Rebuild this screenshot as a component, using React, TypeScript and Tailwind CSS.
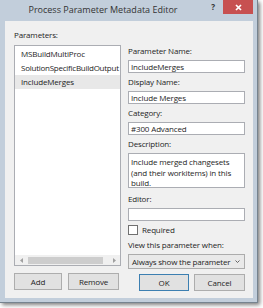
export default function App() {
  const labelCls = "h-[10px] leading-[10px] whitespace-nowrap";
  const inputCls =
    "h-[13px] border border-[#abadb3] bg-white pl-[2px] flex items-center whitespace-nowrap overflow-hidden";
  return (
    <div className="w-[263px] h-[308px] bg-white font-['Open_Sans','Noto_Sans',sans-serif] text-[8px] tracking-[-0.15px] text-[#1e1e1e] leading-[10px]">
      <div className="w-[258px] h-[303px] bg-[#c2cedb] flex flex-col border-r border-b border-[#76838f] shadow-[2px_2px_4px_rgba(0,0,0,0.5)]">
        {/* title bar */}
        <div className="h-[21px] flex items-start shrink-0">
          <div className="w-[206px] h-[20px] flex items-center justify-center text-[9px] tracking-normal text-[#333] whitespace-nowrap">
            Process Parameter Metadata Editor
          </div>
          <div className="w-[14px] h-[13px] flex items-center justify-center text-[8px] font-bold text-[#333]">
            ?
          </div>
          <div className="ml-[3px] w-[30px] h-[14px] bg-[#c75050] flex items-center justify-center">
            <svg width="7" height="7" viewBox="0 0 7 7">
              <path d="M1 1L6 6M6 1L1 6" stroke="white" strokeWidth="1.7" />
            </svg>
          </div>
        </div>
        {/* content */}
        <div className="ml-[5px] w-[248px] h-[277px] bg-[#f0f0f0] pt-[9px] pl-[9px] shrink-0">
          <div className={labelCls}>Parameters:</div>
          <div className="mt-[5px] flex gap-[7px]">
            {/* left column */}
            <div className="w-[107px] flex flex-col">
              <div className="h-[221px] border border-[#abadb3] bg-white flex flex-col overflow-hidden">
                <div className="flex-1 pt-[1px]">
                  <div className="h-[14px] pl-[6px] flex items-center whitespace-nowrap">MSBuildMultiProc</div>
                  <div className="h-[14px] pl-[6px] flex items-center whitespace-nowrap tracking-[-0.25px]">SolutionSpecificBuildOutput</div>
                  <div className="h-[14px] pl-[6px] flex items-center whitespace-nowrap bg-[#e8e8e8]">IncludeMerges</div>
                </div>
                <div className="h-[10px] flex items-center bg-[#f0f0f0] shrink-0">
                  <div className="w-[12px] flex justify-center">
                    <svg width="3" height="5" viewBox="0 0 3 5">
                      <path d="M3 0L0 2.5L3 5Z" fill="#a0a0a0" />
                    </svg>
                  </div>
                  <div className="flex-1 h-[7px] flex">
                    <div className="ml-[1px] w-[75px] h-[7px] bg-[#cdcdcd]" />
                  </div>
                  <div className="w-[12px] flex justify-center">
                    <svg width="3" height="5" viewBox="0 0 3 5">
                      <path d="M0 0L3 2.5L0 5Z" fill="#a0a0a0" />
                    </svg>
                  </div>
                </div>
              </div>
              <div className="mt-[7px] flex gap-[6px]">
                <div className="w-[48px] h-[17px] bg-[#e1e1e1] border border-[#adadad] flex items-center justify-center">Add</div>
                <div className="w-[51px] h-[17px] bg-[#e1e1e1] border border-[#adadad] flex items-center justify-center">Remove</div>
              </div>
            </div>
            {/* right column */}
            <div className="w-[117px] mt-[1px] flex flex-col">
              <div className={labelCls}>Parameter Name:</div>
              <div className={"mt-[4px] " + inputCls}>IncludeMerges</div>
              <div className={"mt-[4px] " + labelCls}>Display Name:</div>
              <div className={"mt-[4px] " + inputCls}>Include Merges</div>
              <div className={"mt-[4px] " + labelCls}>Category:</div>
              <div className={"mt-[4px] " + inputCls}>#300 Advanced</div>
              <div className={"mt-[4px] " + labelCls}>Description:</div>
              <div className="mt-[4px] h-[35px] border border-[#abadb3] bg-white pl-[2px] pt-[3px] leading-[10.5px]">
                Include merged changesets
                <br />
                (and their workitems) in this
                <br />
                build.
              </div>
              <div className={"mt-[6px] " + labelCls}>Editor:</div>
              <div className={"mt-[4px] " + inputCls}></div>
              <div className="mt-[4px] h-[10px] flex items-center">
                <div className="w-[10px] h-[10px] border border-[#707070] bg-white" />
                <span className="ml-[4px]">Required</span>
              </div>
              <div className={"mt-[5px] " + labelCls}>View this parameter when:</div>
              <div className="mt-[4px] h-[15px] border border-[#acacac] bg-[#e9e9e9] flex items-center">
                <div className="w-[102px] pl-[3px] overflow-hidden whitespace-nowrap tracking-[-0.2px]">Always show the parameter</div>
                <div className="flex-1 flex justify-center">
                  <svg width="5" height="3" viewBox="0 0 5 3">
                    <path d="M0.5 0.5L2.5 2.5L4.5 0.5" stroke="#555" strokeWidth="0.9" fill="none" />
                  </svg>
                </div>
              </div>
              <div className="mt-[5px] flex gap-[5px] pl-[11px]">
                <div className="w-[50px] h-[17px] bg-[#e1e1e1] border border-[#3c7fb1] flex items-center justify-center">OK</div>
                <div className="w-[51px] h-[17px] bg-[#e1e1e1] border border-[#adadad] flex items-center justify-center">Cancel</div>
              </div>
            </div>
          </div>
        </div>
      </div>
    </div>
  );
}
